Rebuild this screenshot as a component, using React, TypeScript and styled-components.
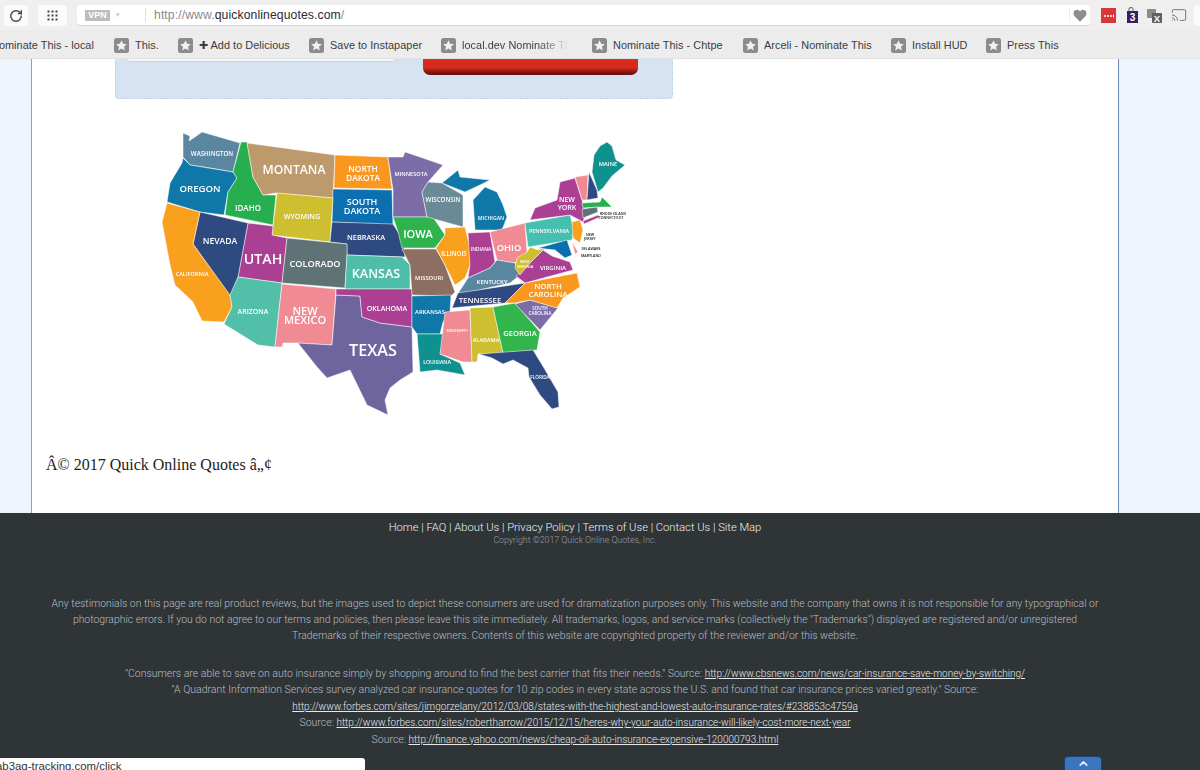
import React from "react";
import styled, { createGlobalStyle } from "styled-components";
import { RotateCw, Cast, ChevronUp } from "lucide-react";

const Global = createGlobalStyle`
  html, body { margin: 0; padding: 0; height: 770px; overflow: hidden; background: #eef4fb; }
  #root { height: 770px; overflow: hidden; }
  * { box-sizing: border-box; }
`;

const Page = styled.div`
  position: relative;
  width: 1200px;
  height: 770px;
  overflow: hidden;
  display: flex;
  flex-direction: column;
  font-family: "Liberation Sans", Arial, sans-serif;
`;

const Toolbar = styled.div`
  height: 30px;
  flex: none;
  background: #efefef;
  display: flex;
  align-items: flex-start;
  padding: 5px 0 0 4px;
`;

const ToolButton = styled.div<{ $w: number; $mr: number }>`
  width: ${(p) => p.$w}px;
  margin-right: ${(p) => p.$mr}px;
  height: 21px;
  flex: none;
  background: #fbfbfb;
  border-radius: 4px;
  display: flex;
  align-items: center;
  justify-content: center;
  color: #444;
`;

const UrlBar = styled.div`
  width: 1013px;
  height: 21px;
  flex: none;
  background: #fff;
  border-bottom: 1px solid #d4d4d4;
  border-radius: 4px;
  display: flex;
  align-items: center;
  padding-left: 8px;
  margin-right: 11px;
`;

const VpnBadge = styled.div`
  width: 25px;
  height: 11px;
  background: #bdbdbd;
  color: #fff;
  font-size: 9px;
  font-weight: 700;
  line-height: 11px;
  text-align: center;
`;

const VpnCaret = styled.span`
  width: 35px;
  flex: none;
  padding-left: 6px;
  font-size: 7px;
  color: #c4c4c4;
`;

const Divider = styled.span`
  width: 1px;
  height: 14px;
  flex: none;
  background: #dedede;
`;

const UrlText = styled.div`
  flex: 1;
  padding-left: 8px;
  font-size: 12.2px;
  color: #8a8a8a;
  white-space: nowrap;
  letter-spacing: 0.1px;
  b { font-weight: 400; color: #2a2a2a; }
`;

const HeartSlot = styled.div`
  width: 21px;
  height: 14px;
  flex: none;
  display: flex;
  align-items: center;
  justify-content: flex-end;
  padding-right: 3px;
  border-left: 1px solid #ececec;
`;

const ExtIcons = styled.div`
  display: flex;
  align-items: center;
  gap: 8px;
  height: 20px;
`;

const EndButton = styled.div`
  width: 20px;
  height: 21px;
  margin-left: 7px;
  flex: none;
  background: #fbfbfb;
  border-radius: 4px;
`;

const Bookmarks = styled.div`
  height: 29px;
  flex: none;
  background: #ececec;
  border-bottom: 1px solid #e2e2e2;
  display: flex;
  align-items: center;
  overflow: hidden;
  padding-top: 2px;
`;

const Bookmark = styled.div<{ $w: number }>`
  width: ${(p) => p.$w}px;
  flex: none;
  display: flex;
  align-items: center;
  gap: 6px;
  white-space: nowrap;
  font-size: 10.9px;
  letter-spacing: 0.04px;
  color: #3c3c3c;
`;

const BookmarkText = styled.span<{ $fade?: boolean }>`
  overflow: hidden;
  ${(p) =>
    p.$fade
      ? "width: 109px; mask-image: linear-gradient(90deg, #000 70%, transparent 98%);"
      : ""}
`;

const ClippedText = styled.span`
  margin-left: -9px;
`;

const Main = styled.div`
  height: 454px;
  flex: none;
  display: flex;
  padding-left: 31px;
  padding-right: 81px;
  background: #eef4fb;
`;

const Sheet = styled.main`
  flex: 1;
  background: #fff;
  border-left: 1px solid #7ba6cc;
  border-right: 1px solid #6a8db5;
  padding-left: 83px;
`;

const FormBox = styled.div`
  width: 558px;
  height: 40px;
  background: #d6e3f3;
  border: 1px dashed #c4d3e6;
  border-top: none;
  border-radius: 0 0 4px 4px;
  display: flex;
  align-items: flex-start;
  padding-left: 12px;
`;

const InputStub = styled.div`
  width: 266px;
  height: 3px;
  background: #f6f6f6;
  border-bottom: 1px solid #cfcfcf;
  border-radius: 0 0 3px 3px;
`;

const SubmitStub = styled.div`
  width: 215px;
  height: 16px;
  margin-left: 29px;
  background: linear-gradient(180deg, #dd2c1c 0%, #d42a1c 55%, #7c1410 85%, #6a100d 100%);
  border-radius: 0 0 7px 7px;
`;

const MapFrame = styled.svg`
  display: block;
  width: 480px;
  height: 295px;
  margin: 26px 0 0 35px;
  font-family: "Open Sans", "Liberation Sans", sans-serif;
  filter: blur(0.35px);
`;

const Trademark = styled.p`
  margin: 35px 0 0 -69px;
  font-family: "Liberation Serif", Georgia, serif;
  font-size: 16px;
  line-height: 20px;
  color: #1c1c1c;
`;

const Footer = styled.footer`
  flex: 1;
  background: #2f3437;
  padding: 8px 50px 0 0;
  text-align: center;
  color: #babec0;
  font-family: Roboto, "Liberation Sans", sans-serif;
  font-weight: 300;
`;

const FooterNav = styled.div`
  font-size: 11.2px;
  line-height: 14px;
  color: #f0f1f2;
`;

const CopyLine = styled.div`
  font-size: 8.8px;
  line-height: 11px;
  color: #9a9ea2;
`;

const Disclaimer = styled.div`
  margin-top: 50px;
  font-size: 10.42px;
  line-height: 16.2px;
`;

const Sources = styled.div`
  margin-top: 21px;
  font-size: 10.5px;
  line-height: 16.5px;
  a { font-size: 10px; color: #e6e8e9; text-decoration: underline; }
`;

const StatusBubble = styled.div`
  position: absolute;
  left: 0;
  bottom: 0;
  width: 365px;
  height: 12px;
  background: #fff;
  border-radius: 0 3px 0 0;
  overflow: hidden;
  font-size: 11.4px;
  line-height: 16px;
  color: #333;
  white-space: nowrap;
  text-indent: -4px;
`;

const TopButton = styled.div`
  position: absolute;
  left: 1064px;
  bottom: 0;
  width: 38px;
  height: 14px;
  background: #3b74bf;
  border: 1px solid #1e3f66;
  border-bottom: none;
  border-radius: 4px 4px 0 0;
  display: flex;
  justify-content: center;
  color: #e8f0fa;
`;

const StarIcon = () => (
  <svg width="15" height="15" viewBox="0 0 15 15" style={{ flex: "none" }}>
    <rect width="15" height="15" rx="2.5" fill="#8b8b8b" />
    <path d="M7.5 2.3l1.6 3.5 3.7.4-2.8 2.5.8 3.7-3.3-1.9-3.3 1.9.8-3.7-2.8-2.5 3.7-.4z" fill="#f1f1f1" />
  </svg>
);

const AppsIcon = () => (
  <svg width="13" height="13" viewBox="0 0 13 13" fill="#444">
    {[1.5, 5.5, 9.5].flatMap((y) =>
      [1.5, 5.5, 9.5].map((x) => <rect key={`${x}-${y}`} x={x} y={y} width="2" height="2" />)
    )}
  </svg>
);

const states: [string, string][] = [
  ["#5b86a0", "183,133 190,136 189,141 195,137 202,132 240,143 233,172 210,168 190,165 183,157"],
  ["#0f78a8", "183,158 190,165 233,172 237,178 228,192 224,215 200,212 167,202 170,183 182,163"],
  ["#27ae4f", "241,142 247,142 253,177 263,195 276,195 273,225 225,215 228,192 237,178 233,172"],
  ["#bd9a6c", "247,143 335,155 333,198 276,193 263,195 253,177"],
  ["#f9971e", "335,155 388,157 392,189 334,188"],
  ["#0b6fb0", "333,189 392,190 393,225 332,222"],
  ["#7c6ca7", "388,157 403,157 405,152 420,157 443,165 428,182 422,192 427,217 393,217 393,190"],
  ["#cdbf2f", "277,193 333,198 330,242 272,235"],
  ["#2f4a80", "332,222 393,224 398,232 403,240 405,257 347,255 347,244 330,242"],
  ["#ab3f93", "248,223 273,226 272,235 287,238 282,283 238,277"],
  ["#2f4a80", "200,212 248,223 238,277 235,285 230,296 193,244"],
  ["#f9a01f", "167,203 200,212 193,244 230,295 232,307 224,322 202,321 193,302 175,285 170,265 162,222"],
  ["#5f7377", "287,238 347,244 347,256 345,288 282,283"],
  ["#4fbea8", "347,255 402,257 410,265 410,289 345,289"],
  ["#52bfa9", "238,277 282,283 275,347 258,345 224,324 232,307 230,295"],
  ["#f08a93", "282,284 336,289 332,345 298,343 283,343 282,347 275,347"],
  ["#6e659f", "336,295 360,296 362,317 380,323 412,327 413,372 400,380 390,388 385,400 388,415 367,405 350,370 327,378 317,367 298,343 332,345"],
  ["#ab3f93", "336,289 412,289 412,327 380,323 362,317 360,296 336,295"],
  ["#2fb34f", "393,217 433,217 445,235 435,248 402,248 398,232"],
  ["#8d6f62", "402,249 436,249 445,265 455,292 451,296 412,295 410,265"],
  ["#0f78a8", "412,296 451,295 450,312 443,322 440,334 417,334 412,327"],
  ["#0f918f", "417,334 445,334 440,354 460,363 465,375 437,370 420,372"],
  ["#6a8a97", "422,192 428,182 442,183 463,195 463,227 427,217"],
  ["#0f78a8", "442,183 458,170 460,177 490,180 480,185 465,192"],
  ["#0f78a8", "475,230 473,200 485,187 497,192 503,205 507,217 502,230"],
  ["#f9a01f", "445,228 465,227 470,248 470,265 465,278 455,285 445,265 436,248 445,235"],
  ["#ab3f93", "468,233 490,232 495,262 490,268 468,278 470,265"],
  ["#f08a93", "490,232 525,223 527,252 515,263 497,260"],
  ["#5b86a0", "457,295 468,278 490,268 497,260 515,263 520,275 510,283"],
  ["#2f4a80", "452,308 458,293 525,283 505,303 462,307"],
  ["#f08a93", "445,312 470,310 472,362 463,362 440,354"],
  ["#cdbf2f", "470,308 493,307 503,353 478,354 477,362 472,362"],
  ["#33b54d", "493,307 515,303 540,332 537,350 503,353"],
  ["#2f4a80", "479,354 533,350 544,368 558,392 559,407 552,409 540,395 529,377 528,368 513,360 503,364 492,358"],
  ["#7c6ca7", "515,304 530,300 558,308 540,330"],
  ["#f9971e", "505,303 525,283 577,273 580,287 563,298 557,308 530,300 515,303"],
  ["#ab3f93", "516,276 530,263 543,250 552,256 570,262 573,270 525,283"],
  ["#cdbf2f", "515,268 517,258 527,252 530,247 538,250 553,246 543,250 530,263 520,275"],
  ["#45bfae", "525,223 570,215 574,230 572,240 528,247"],
  ["#ab3f93", "530,220 535,208 557,200 560,182 575,178 582,200 585,215 583,222 570,215"],
  ["#f9a01f", "572,222 580,220 583,230 580,243 573,238"],
  ["#0b6fb0", "538,248 567,240 572,255 565,258 555,250"],
  ["#f08a93", "572,242 578,252 575,254"],
  ["#f08a93", "575,177 588,175 587,200 582,200"],
  ["#2f4a80", "589,172 597,190 598,198 587,200"],
  ["#0f918f", "594,155 600,146 607,142 612,146 616,160 625,165 612,176 603,188 598,192 592,172"],
  ["#27ae4f", "582,203 600,202 602,197 612,207 600,207 583,208"],
  ["#5f7377", "582,209 597,207 598,212 583,218"],
  ["#ab3f93", "583,221 598,215 600,217 584,224"],
];

const labels: [string, number, number, number, string?][] = [
  ["WASHINGTON", 212, 156, 6.2],
  ["OREGON", 200, 192, 9.6],
  ["IDAHO", 248, 211, 8],
  ["MONTANA", 294, 174, 12.2],
  ["NORTH", 363, 172, 8.4],
  ["DAKOTA", 363, 181, 8.4],
  ["SOUTH", 362, 205, 9],
  ["DAKOTA", 362, 214, 9],
  ["WYOMING", 302, 219, 7.2],
  ["NEBRASKA", 366, 240, 7.4],
  ["NEVADA", 220, 244, 8.6],
  ["UTAH", 263, 264, 14.2],
  ["COLORADO", 315, 267, 9.2],
  ["KANSAS", 376, 278, 12.6],
  ["CALIFORNIA", 192, 276, 5.6],
  ["ARIZONA", 253, 314, 7],
  ["NEW", 305, 315, 11],
  ["MEXICO", 305, 324, 11],
  ["TEXAS", 373, 356, 16.2],
  ["OKLAHOMA", 387, 311, 7],
  ["MINNESOTA", 411, 176, 5.6],
  ["WISCONSIN", 443, 202, 6.2],
  ["MICHIGAN", 491, 220, 5.2],
  ["IOWA", 418, 238, 11],
  ["ILLINOIS", 454, 256, 6.2],
  ["INDIANA", 481, 251, 4.8],
  ["OHIO", 509, 251, 9.4],
  ["MISSOURI", 429, 280, 5.8],
  ["ARKANSAS", 430, 314, 5.8],
  ["KENTUCKY", 492, 284, 6],
  ["TENNESSEE", 480, 303, 7.8],
  ["MISSISSIPPI", 457, 332, 3.8],
  ["ALABAMA", 486, 342, 5.6],
  ["GEORGIA", 520, 336, 7.6],
  ["FLORIDA", 540, 379, 4.6],
  ["LOUISIANA", 437, 364, 5.2],
  ["SOUTH", 540, 310, 4.6],
  ["CAROLINA", 540, 315, 4.6],
  ["NORTH", 548, 289, 7.8],
  ["CAROLINA", 548, 297, 7.8],
  ["VIRGINIA", 553, 270, 6],
  ["WEST", 525, 263, 3.8],
  ["VIRGINIA", 525, 268, 3.8],
  ["PENNSYLVANIA", 549, 233, 5.4],
  ["NEW", 567, 202, 7],
  ["YORK", 567, 210, 7],
  ["MAINE", 608, 166, 5.8],
  ["RHODE ISLAND", 613, 215, 3.6, "#111"],
  ["CONNECTICUT", 611, 219, 3.6, "#111"],
  ["NEW", 590, 236, 3.6, "#111"],
  ["JERSEY", 590, 240, 3.6, "#111"],
  ["DELAWARE", 591, 250, 3.6, "#111"],
  ["MARYLAND", 591, 257, 3.6, "#111"],
];

const StateMap = () => (
  <MapFrame viewBox="150 125 480 295">
    {states.map(([fill, points], i) => (
      <polygon key={i} points={points} fill={fill} stroke="#fff" strokeWidth="0.5" strokeLinejoin="round" />
    ))}
    {labels.map(([text, x, y, size, fill], i) => (
      <text key={i} x={x} y={y} fontSize={size} fontWeight={600} textAnchor="middle" fill={fill ?? "#fff"}>
        {text}
      </text>
    ))}
  </MapFrame>
);

const bookmarks: { label: React.ReactNode; w: number; fade?: boolean }[] = [
  { label: "This.", w: 64 },
  { label: "✚ Add to Delicious", w: 131 },
  { label: "Save to Instapaper", w: 132 },
  { label: "local.dev Nominate This", w: 151, fade: true },
  { label: "Nominate This - Chtpe", w: 151 },
  { label: "Arceli - Nominate This", w: 148 },
  { label: "Install HUD", w: 95 },
  { label: "Press This", w: 80 },
];

export default function App() {
  return (
    <Page>
      <Global />
      <Toolbar>
        <ToolButton $w={24} $mr={10}>
          <RotateCw size={14} strokeWidth={2.4} />
        </ToolButton>
        <ToolButton $w={29} $mr={10}>
          <AppsIcon />
        </ToolButton>
        <UrlBar>
          <VpnBadge>VPN</VpnBadge>
          <VpnCaret>▾</VpnCaret>
          <Divider />
          <UrlText>
            http://www.<b>quickonlinequotes.com</b>/
          </UrlText>
          <HeartSlot>
            <svg width="14" height="13" viewBox="0 0 24 22" fill="#8e8e8e">
              <path d="M12 21.5 2.8 12.2C-.2 9.1.3 4.4 3.6 2.2c2.9-1.9 6.4-1 8.4 1.8 2-2.8 5.5-3.7 8.4-1.8 3.3 2.2 3.8 6.9.8 10z" />
            </svg>
          </HeartSlot>
        </UrlBar>
        <ExtIcons>
          <svg width="15" height="15" viewBox="0 0 15 15">
            <rect width="15" height="15" fill="#d8383a" />
            <circle cx="4" cy="8" r="1" fill="#fff" />
            <circle cx="7" cy="8" r="1" fill="#fff" />
            <circle cx="10" cy="8" r="1" fill="#fff" />
            <rect x="12" y="6.5" width="1" height="3" fill="#fff" />
          </svg>
          <svg width="13" height="16" viewBox="0 0 13 16" style={{ marginLeft: 2 }}>
            <path d="M3 4V2.5a2 2 0 0 1 4 0V4" fill="none" stroke="#777" strokeWidth="1.2" />
            <rect x="1" y="4" width="11" height="12" fill="#3a1e5e" />
            <text x="6.5" y="14" fontSize="10" fontWeight="700" fontFamily="Liberation Sans" textAnchor="middle" fill="#fff">3</text>
          </svg>
          <svg width="15" height="15" viewBox="0 0 15 15">
            <rect x="0" y="1" width="9" height="9" rx="1" fill="#8b8b8b" />
            <rect x="5" y="5" width="10" height="10" rx="1" fill="#5f5f5f" />
            <text x="10" y="14" fontSize="9.5" fontWeight="700" fontFamily="Liberation Sans" textAnchor="middle" fill="#fff">X</text>
          </svg>
          <Cast size={16} color="#777" strokeWidth={1.5} style={{ marginLeft: 1 }} />
        </ExtIcons>
        <EndButton />
      </Toolbar>
      <Bookmarks>
        <Bookmark $w={114}>
          <ClippedText>Nominate This - local</ClippedText>
        </Bookmark>
        {bookmarks.map((b, i) => (
          <Bookmark key={i} $w={b.w}>
            <StarIcon />
            <BookmarkText $fade={b.fade}>{b.label}</BookmarkText>
          </Bookmark>
        ))}
      </Bookmarks>
      <Main>
        <Sheet>
          <FormBox>
            <InputStub />
            <SubmitStub />
          </FormBox>
          <StateMap />
          <Trademark>Â© 2017 Quick Online Quotes â„¢</Trademark>
        </Sheet>
      </Main>
      <Footer>
        <FooterNav>Home | FAQ | About Us | Privacy Policy | Terms of Use | Contact Us | Site Map</FooterNav>
        <CopyLine>Copyright ©2017 Quick Online Quotes, Inc.</CopyLine>
        <Disclaimer>
          Any testimonials on this page are real product reviews, but the images used to depict these consumers are used for dramatization purposes only. This website and the company that owns it is not responsible for any typographical or
          <br />
          photographic errors. If you do not agree to our terms and policies, then please leave this site immediately. All trademarks, logos, and service marks (collectively the "Trademarks") displayed are registered and/or unregistered
          <br />
          Trademarks of their respective owners. Contents of this website are copyrighted property of the reviewer and/or this website.
        </Disclaimer>
        <Sources>
          "Consumers are able to save on auto insurance simply by shopping around to find the best carrier that fits their needs." Source: <a>http://www.cbsnews.com/news/car-insurance-save-money-by-switching/</a>
          <br />
          "A Quadrant Information Services survey analyzed car insurance quotes for 10 zip codes in every state across the U.S. and found that car insurance prices varied greatly." Source:
          <br />
          <a>http://www.forbes.com/sites/jimgorzelany/2012/03/08/states-with-the-highest-and-lowest-auto-insurance-rates/#238853c4759a</a>
          <br />
          Source: <a>http://www.forbes.com/sites/robertharrow/2015/12/15/heres-why-your-auto-insurance-will-likely-cost-more-next-year</a>
          <br />
          Source: <a>http://finance.yahoo.com/news/cheap-oil-auto-insurance-expensive-120000793.html</a>
        </Sources>
      </Footer>
      <StatusBubble>ab3aq-tracking.com/click</StatusBubble>
      <TopButton>
        <ChevronUp size={13} strokeWidth={3} />
      </TopButton>
    </Page>
  );
}
